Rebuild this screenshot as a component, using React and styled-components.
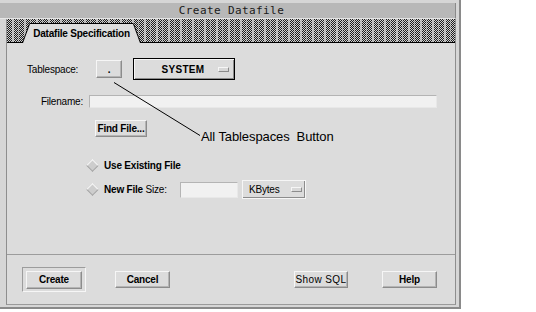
import React from 'react';
import styled, { createGlobalStyle } from 'styled-components';

const Global = createGlobalStyle`
  html, body { margin: 0; padding: 0; background: #ffffff; }
  body { font-family: "Liberation Sans", Arial, sans-serif; font-size: 10px; color: #000; }
  * { box-sizing: border-box; }
`;

const Window = styled.div`
  position: relative;
  width: 461px;
  height: 309px;
  background: #d6d6d6;
  border-right: 2px solid #8a8a8a;
  border-bottom: 2px solid #8a8a8a;
  padding: 3px 3px 2px 6px;
  display: flex;
  flex-direction: column;
`;

const TitleBar = styled.div`
  margin-left: -6px;
  height: 16px;
  background: #b8b8b8;
  border-right: 1px solid #8a8a8a;
  border-bottom: 1px solid #e6e6e6;
  display: flex;
  align-items: center;
  justify-content: center;
  font-family: "DejaVu Sans Mono", "Liberation Mono", monospace;
  font-size: 11px;
  letter-spacing: 0.4px;
  color: #1a1a1a;
  padding-left: 8px;
`;

const Body = styled.div`
  flex: 1;
  display: flex;
  flex-direction: column;
  border-left: 1px solid #8e8e8e;
  border-right: 1px solid #8e8e8e;
  border-bottom: 1px solid #9a9a9a;
  background: #dcdcdc;
`;

const TabStrip = styled.div`
  height: 24px;
  display: flex;
  align-items: flex-end;
  padding-left: 15px;
  border-bottom: 1px solid #000;
  background-color: #d0d0d0;
  background-image:
    repeating-linear-gradient(90deg, transparent 0 5px, rgba(214,214,214,0.75) 5px 7px, transparent 7px 11px, rgba(214,214,214,0.5) 11px 12px),
    repeating-conic-gradient(#1c1c1c 0 25%, transparent 0 50%);
  background-size: auto, 2px 2px;
`;

const Tab = styled.div`
  position: relative;
  z-index: 1;
  width: 119px;
  height: 20px;
  margin-bottom: -1px;
  background: #000;
  clip-path: polygon(0 100%, 7px 1px, 8px 0, calc(100% - 8px) 0, calc(100% - 7px) 1px, 100% 100%);
`;

const TabFace = styled.div`
  position: absolute;
  inset: 1px 0 0 0;
  background: #dcdcdc;
  clip-path: polygon(1px 100%, 8px 0, calc(100% - 8px) 0, calc(100% - 1px) 100%);
  display: flex;
  align-items: center;
  justify-content: center;
  font-weight: bold;
  font-size: 10px;
  letter-spacing: -0.2px;
  padding-bottom: 1px;
`;

const Content = styled.div`
  flex: 1;
  display: flex;
  flex-direction: column;
  padding: 15px 0 0 20px;
  letter-spacing: -0.2px;
`;

const Row = styled.div`
  display: flex;
  align-items: center;
  height: ${p => p.$h}px;
  margin-top: ${p => p.$top || 0}px;
  margin-left: ${p => p.$indent || 0}px;
`;

const Label = styled.div`
  width: ${p => p.$w}px;
  text-align: ${p => p.$align || 'left'};
  padding-right: ${p => p.$pr || 0}px;
  font-weight: ${p => (p.$bold ? 'bold' : 'normal')};
  flex: none;
`;

const PushButton = styled.div`
  width: ${p => p.$w}px;
  height: ${p => p.$h || 17}px;
  margin-left: ${p => p.$ml || 0}px;
  flex: none;
  display: flex;
  align-items: center;
  justify-content: center;
  background: #dcdcdc;
  border: 1px solid;
  border-color: #f6f6f6 #8c8c8c #8c8c8c #f6f6f6;
  box-shadow: inset -1px -1px 0 #b4b4b4;
  font-weight: ${p => (p.$regular ? 'normal' : 'bold')};
  font-size: 10px;
  letter-spacing: ${p => (p.$wide ? '0.4px' : '-0.2px')};
`;

const OptionMenu = styled.div`
  width: ${p => p.$w}px;
  height: ${p => p.$h}px;
  margin-left: ${p => p.$ml || 0}px;
  flex: none;
  display: flex;
  align-items: center;
  background: #dcdcdc;
  border: 1px solid ${p => (p.$framed ? '#000' : '#f6f6f6')};
  box-shadow: ${p =>
    p.$framed
      ? 'inset 1px 1px 0 #f6f6f6, inset -1px -1px 0 #8c8c8c'
      : 'inset -1px -1px 0 #8c8c8c'};
  padding: 0 ${p => p.$pr || 5}px 0 ${p => p.$pl || 6}px;
  font-weight: ${p => (p.$bold ? 'bold' : 'normal')};
`;

const OptionText = styled.span`
  flex: 1;
  text-align: ${p => (p.$center ? 'center' : 'left')};
  letter-spacing: ${p => (p.$center ? '0.3px' : '-0.2px')};
`;

const Indicator = styled.span`
  width: 11px;
  height: 5px;
  flex: none;
  background: #d8d8d8;
  border: 1px solid;
  border-color: #f6f6f6 #8c8c8c #8c8c8c #f6f6f6;
`;

const TextField = styled.div`
  width: ${p => p.$w}px;
  height: ${p => p.$h}px;
  margin-left: ${p => p.$ml || 0}px;
  flex: none;
  background: #f1f1f1;
  border: 1px solid;
  border-color: #b4b4b4 #e8e8e8 #e8e8e8 #b4b4b4;
`;

const Diamond = styled.span`
  width: 10px;
  height: 10px;
  flex: none;
  display: flex;
  align-items: center;
  justify-content: center;
  margin-right: 7px;
  &::before {
    content: '';
    width: 7px;
    height: 7px;
    transform: rotate(45deg);
    background: #cdcdcd;
    border: 1px solid;
    border-color: #fafafa #a4a4a4 #a4a4a4 #fafafa;
  }
`;

const ButtonBar = styled.div`
  height: 50px;
  border-top: 1px solid #9c9c9c;
  display: flex;
  align-items: center;
  padding-left: 15px;
  letter-spacing: -0.2px;
`;

const DefaultFrame = styled.div`
  width: 64px;
  height: 25px;
  flex: none;
  display: flex;
  align-items: center;
  justify-content: center;
  border: 1px solid;
  border-color: #9c9c9c #f6f6f6 #f6f6f6 #9c9c9c;
`;

const Callout = styled.svg`
  position: absolute;
  left: 0;
  top: 0;
  pointer-events: none;
`;

const CalloutText = styled.div`
  position: absolute;
  left: 201px;
  top: 129px;
  font-size: 13px;
  line-height: 15px;
  white-space: pre;
  letter-spacing: -0.1px;
`;

export default function App() {
  return (
    <>
      <Global />
      <Window>
        <TitleBar>Create Datafile</TitleBar>
        <Body>
          <TabStrip>
            <Tab>
              <TabFace>Datafile Specification</TabFace>
            </Tab>
          </TabStrip>
          <Content>
            <Row $h={22}>
              <Label $w={69}>Tablespace:</Label>
              <PushButton $w={26} $h={18}>.</PushButton>
              <OptionMenu $w={102} $h={22} $ml={11} $framed $bold $pl={14} $pr={5}>
                <OptionText $center>SYSTEM</OptionText>
                <Indicator />
              </OptionMenu>
            </Row>
            <Row $h={13} $top={15}>
              <Label $w={62} $align="right" $pr={6}>Filename:</Label>
              <TextField $w={348} $h={13} />
            </Row>
            <Row $h={17} $top={12} $indent={68}>
              <PushButton $w={52} $h={17}>Find File...</PushButton>
            </Row>
            <Row $h={12} $top={22} $indent={60}>
              <Diamond />
              <Label $bold>Use Existing File</Label>
            </Row>
            <Row $h={19} $top={9} $indent={60}>
              <Diamond />
              <Label $w={76}>
                <b>New File</b> Size:
              </Label>
              <TextField $w={58} $h={16} />
              <OptionMenu $w={64} $h={19} $ml={4} $pl={6} $pr={3}>
                <OptionText>KBytes</OptionText>
                <Indicator />
              </OptionMenu>
            </Row>
          </Content>
          <ButtonBar>
            <DefaultFrame>
              <PushButton $w={56} $h={18}>Create</PushButton>
            </DefaultFrame>
            <PushButton $w={55} $ml={29}>Cancel</PushButton>
            <PushButton $w={54} $ml={124} $regular $wide>Show SQL</PushButton>
            <PushButton $w={55} $ml={34}>Help</PushButton>
          </ButtonBar>
        </Body>
        <Callout width="461" height="309">
          <line x1="114" y1="82.5" x2="200" y2="135.5" stroke="#000" strokeWidth="1" />
        </Callout>
        <CalloutText>All Tablespaces  Button</CalloutText>
      </Window>
    </>
  );
}
